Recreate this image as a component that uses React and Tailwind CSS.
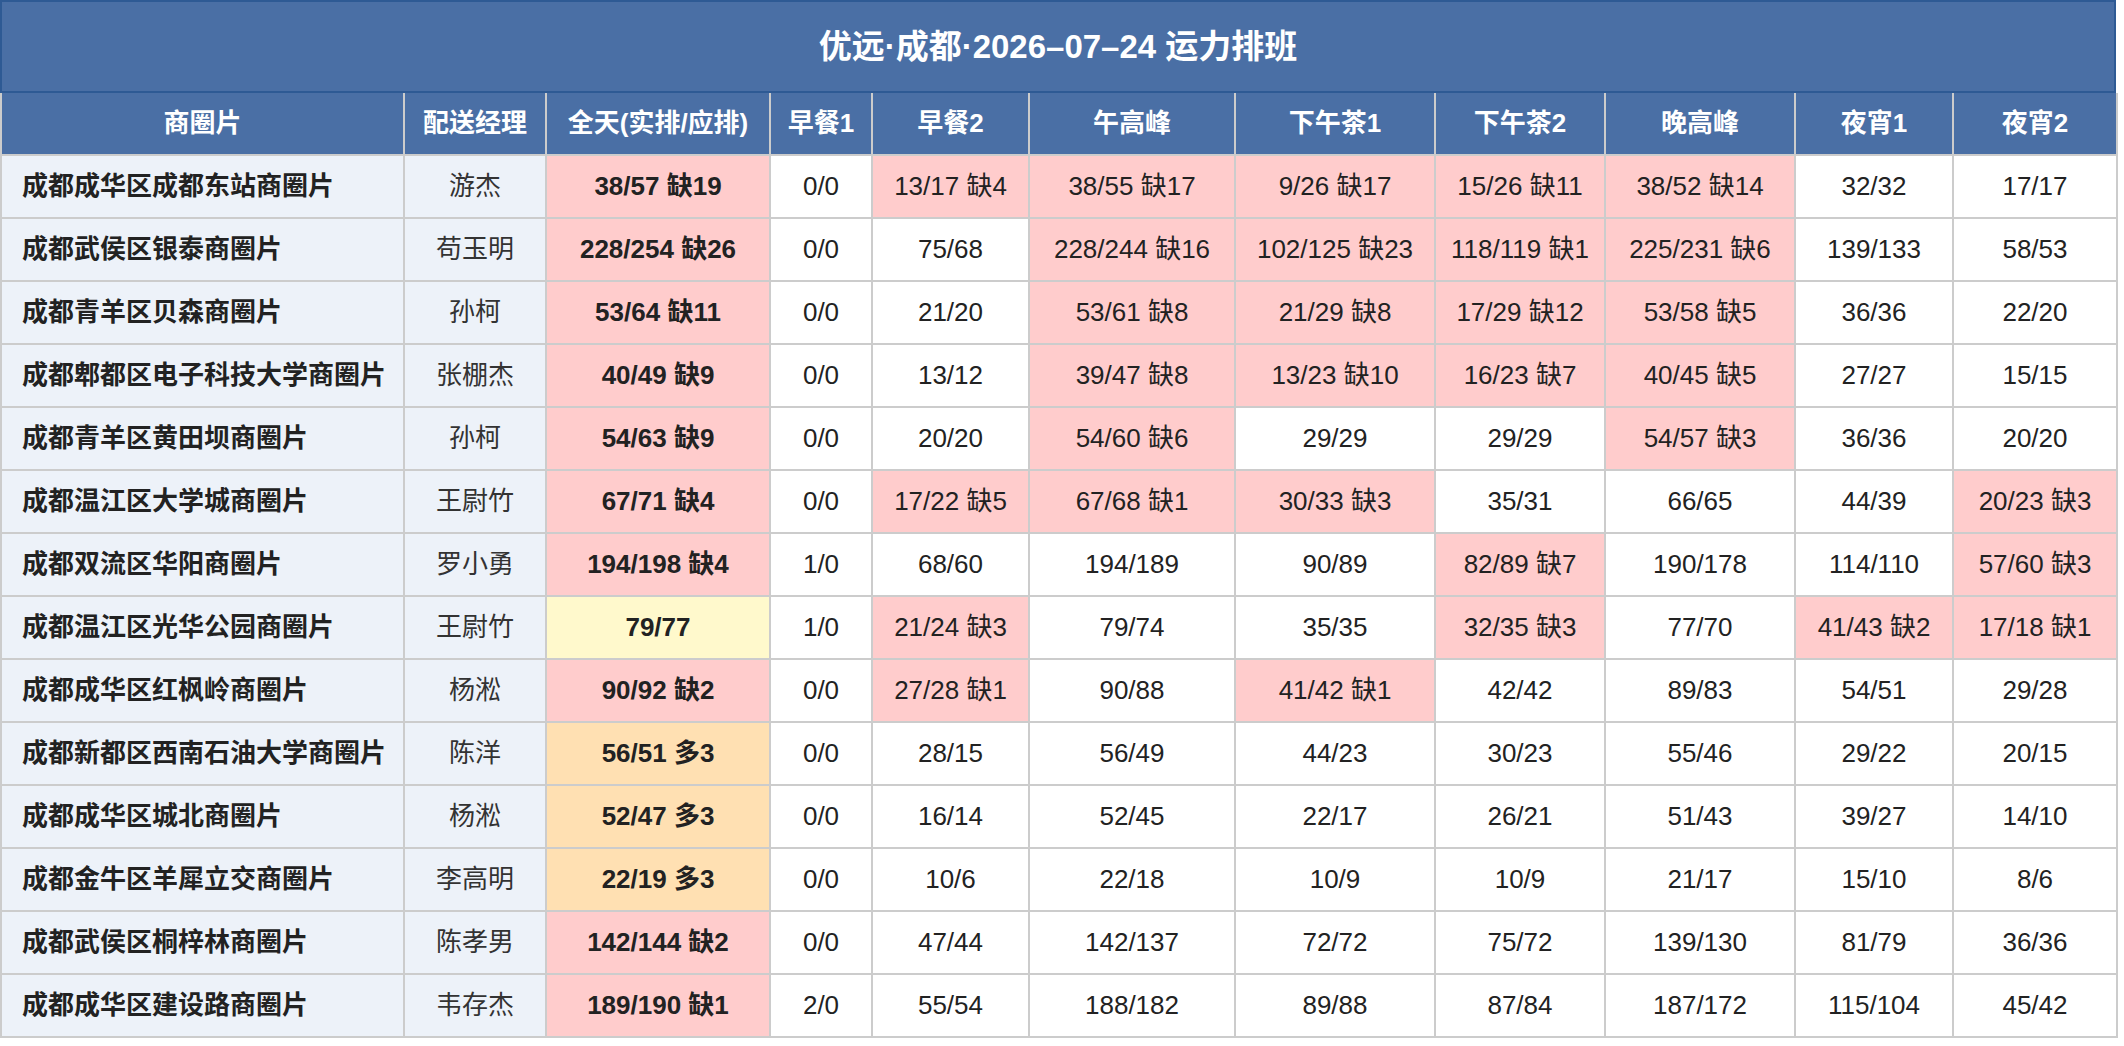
import React from 'react';

const columns = ['商圈片', '配送经理', '全天(实排/应排)', '早餐1', '早餐2', '午高峰', '下午茶1', '下午茶2', '晚高峰', '夜宵1', '夜宵2'];

const widths = ['w-[403px]', 'w-[142px]', 'w-[224px]', 'w-[102px]', 'w-[157px]', 'w-[206px]', 'w-[200px]', 'w-[170px]', 'w-[190px]', 'w-[158px]', 'w-[164px]'];

// each row: area, manager, then 9 slots (full day first)
const rows = [
  ['成都成华区成都东站商圈片', '游杰', ['38/57 缺19', '0/0', '13/17 缺4', '38/55 缺17', '9/26 缺17', '15/26 缺11', '38/52 缺14', '32/32', '17/17']],
  ['成都武侯区银泰商圈片', '苟玉明', ['228/254 缺26', '0/0', '75/68', '228/244 缺16', '102/125 缺23', '118/119 缺1', '225/231 缺6', '139/133', '58/53']],
  ['成都青羊区贝森商圈片', '孙柯', ['53/64 缺11', '0/0', '21/20', '53/61 缺8', '21/29 缺8', '17/29 缺12', '53/58 缺5', '36/36', '22/20']],
  ['成都郫都区电子科技大学商圈片', '张棚杰', ['40/49 缺9', '0/0', '13/12', '39/47 缺8', '13/23 缺10', '16/23 缺7', '40/45 缺5', '27/27', '15/15']],
  ['成都青羊区黄田坝商圈片', '孙柯', ['54/63 缺9', '0/0', '20/20', '54/60 缺6', '29/29', '29/29', '54/57 缺3', '36/36', '20/20']],
  ['成都温江区大学城商圈片', '王尉竹', ['67/71 缺4', '0/0', '17/22 缺5', '67/68 缺1', '30/33 缺3', '35/31', '66/65', '44/39', '20/23 缺3']],
  ['成都双流区华阳商圈片', '罗小勇', ['194/198 缺4', '1/0', '68/60', '194/189', '90/89', '82/89 缺7', '190/178', '114/110', '57/60 缺3']],
  ['成都温江区光华公园商圈片', '王尉竹', ['79/77', '1/0', '21/24 缺3', '79/74', '35/35', '32/35 缺3', '77/70', '41/43 缺2', '17/18 缺1']],
  ['成都成华区红枫岭商圈片', '杨淞', ['90/92 缺2', '0/0', '27/28 缺1', '90/88', '41/42 缺1', '42/42', '89/83', '54/51', '29/28']],
  ['成都新都区西南石油大学商圈片', '陈洋', ['56/51 多3', '0/0', '28/15', '56/49', '44/23', '30/23', '55/46', '29/22', '20/15']],
  ['成都成华区城北商圈片', '杨淞', ['52/47 多3', '0/0', '16/14', '52/45', '22/17', '26/21', '51/43', '39/27', '14/10']],
  ['成都金牛区羊犀立交商圈片', '李高明', ['22/19 多3', '0/0', '10/6', '22/18', '10/9', '10/9', '21/17', '15/10', '8/6']],
  ['成都武侯区桐梓林商圈片', '陈孝男', ['142/144 缺2', '0/0', '47/44', '142/137', '72/72', '75/72', '139/130', '81/79', '36/36']],
  ['成都成华区建设路商圈片', '韦存杰', ['189/190 缺1', '2/0', '55/54', '188/182', '89/88', '87/84', '187/172', '115/104', '45/42']],
];

const cellBg = (v) => {
  if (v.includes('缺')) return 'bg-[#ffcccc]';
  if (v.includes('多')) return 'bg-[#ffe0b2]';
  return 'bg-white';
};

const fullDayBg = (v) => {
  if (v.includes('缺')) return 'bg-[#ffcccc]';
  if (v.includes('多')) return 'bg-[#ffe0b2]';
  return 'bg-[#fff9cc]';
};

export default function App() {
  return (
    <div
      className="w-[2116px] bg-white"
      style={{ fontFamily: '"Liberation Sans", "Noto Sans CJK SC", sans-serif' }}
    >
      {/* Title bar */}
      <div className="h-[93px] border-2 border-[#2e5a94] bg-[#4a6fa5] flex items-center justify-center text-white text-[33px] font-bold">
        优远·成都·2026–07–24 运力排班
      </div>

      <table className="w-[2116px] table-fixed border-collapse text-[26px]">
        <colgroup>
          {widths.map((w, i) => (
            <col key={i} className={w} />
          ))}
        </colgroup>
        <thead>
          <tr className="h-[62px]">
            {columns.map((c) => (
              <th
                key={c}
                className="border-x-2 border-b-2 border-[#cccccc] bg-[#4a6fa5] text-white font-bold text-center p-0"
              >
                {c}
              </th>
            ))}
          </tr>
        </thead>
        <tbody>
          {rows.map(([area, manager, vals]) => (
            <tr key={area} className="h-[63px]">
              <td className="border-2 border-[#cccccc] bg-[#edf2f9] text-[#222] font-bold text-left pl-[20px] p-0">
                {area}
              </td>
              <td className="border-2 border-[#cccccc] bg-[#edf2f9] text-[#333] text-center p-0">
                {manager}
              </td>
              {vals.map((v, i) => (
                <td
                  key={i}
                  className={`border-2 border-[#cccccc] text-[#222] text-center p-0 ${
                    i === 0 ? `font-bold ${fullDayBg(v)}` : cellBg(v)
                  }`}
                >
                  {v}
                </td>
              ))}
            </tr>
          ))}
        </tbody>
      </table>
    </div>
  );
}
